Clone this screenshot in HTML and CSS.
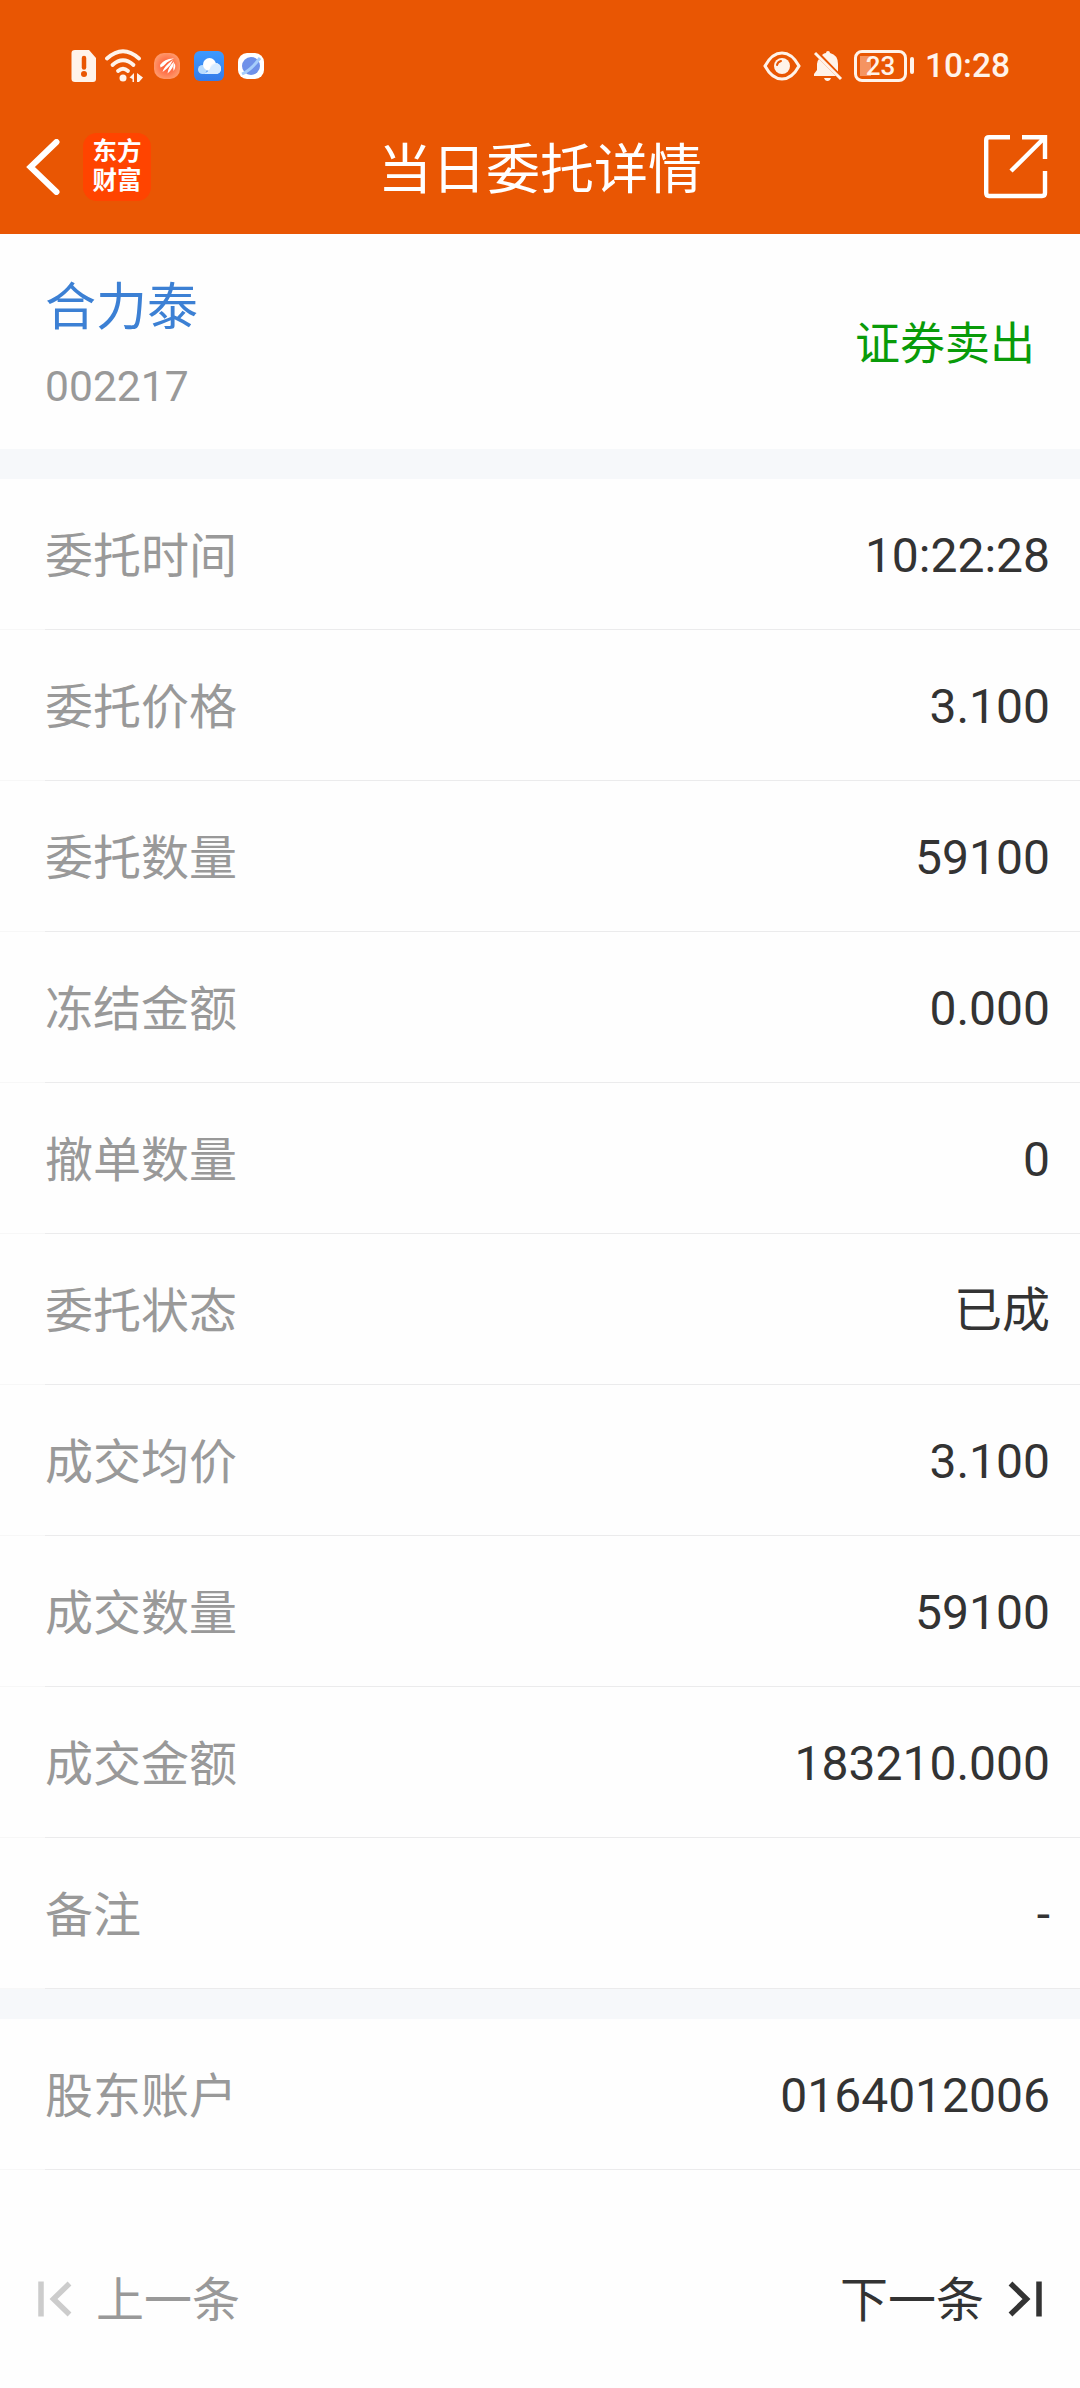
FILE: index.html
```html
<!DOCTYPE html>
<html lang="zh-CN">
<head>
<meta charset="utf-8">
<title>当日委托详情</title>
<link rel="stylesheet" href="styles.css">
</head>
<body>
<header class="header">
  <div class="status">
    <div class="status-left">
      <svg class="i-sim" width="26" height="34" viewBox="0 0 26 34"><path fill="#fff3ea" d="M4 1H18L25 9V30Q25 33 22 33H4Q0.500 33 0.500 30V4Q0.500 1 4 1Z"/><path d="M13 9V18.500" stroke="#e95603" stroke-width="4.500" stroke-linecap="round"/><circle cx="13" cy="25" r="3" fill="#e95603"/></svg>
      <svg class="i-wifi" width="39" height="34" viewBox="0 0 39 34"><g fill="none" stroke="#fff3ea" stroke-width="3.800" stroke-linecap="round"><path d="M2 9.500Q18 -5 34 9.500"/><path d="M7.500 16Q18 6.500 28.500 16"/><path d="M13 22Q18 17.500 23 22"/></g><circle cx="18" cy="29" r="3.500" fill="#fff3ea"/><path fill="#fff3ea" d="M29 24V33H27.500V30L24.500 28.500ZM32 33V24L38 28.500L34 33Z"/></svg>
      <svg class="i-news" width="26" height="26" viewBox="0 0 26 26"><defs><radialGradient id="news"><stop offset=".3" stop-color="#ff633d"/><stop offset="1" stop-color="#ff9668"/></radialGradient></defs><rect width="26" height="26" rx="10" fill="url(#news)"/><path fill="#fff" d="M6 12Q11 5 20 5.500Q14 8 11.500 11Q9 14 6.500 14.500ZM19 7Q17 12 13 15.500Q10 18 8.500 19Q10 13 19 7ZM20 8.500Q20 15 13.500 20.500Q14 14 20 8.500ZM20.500 10Q22.500 14 19.500 18Q18.500 14 20.500 10Z"/></svg>
      <svg class="i-cloud" width="30" height="30" viewBox="0 0 30 30"><defs><linearGradient id="sky" x2="0" y2="1"><stop stop-color="#3d9aff"/><stop offset="1" stop-color="#347be9"/></linearGradient></defs><rect width="30" height="30" rx="6" fill="url(#sky)"/><circle cx="8.500" cy="18.500" r="4.500" fill="#b9dcff"/><circle cx="15.500" cy="13.500" r="6.500" fill="#fff"/><circle cx="21.500" cy="17.500" r="5.500" fill="#eef6ff"/><path fill="#d9ecff" d="M8 23Q14 22 17 16Q19 13 23 12Q27 14 27 18Q27 23 21 23Z"/></svg>
      <svg class="i-planet" width="26" height="26" viewBox="0 0 26 26"><rect width="26" height="26" rx="9" fill="#fff"/><circle cx="13" cy="13" r="9" fill="#6f91e9"/><path d="M4 21Q13 17 22 5" fill="none" stroke="#a6cdfb" stroke-width="3"/></svg>
    </div>
    <div class="status-right">
      <svg class="i-eye" width="38" height="30" viewBox="0 0 38 30"><path d="M2 15Q9 2 19 2T36 15Q29 28 19 28T2 15Z" fill="none" stroke="#fff3ea" stroke-width="3"/><circle cx="19" cy="15" r="8" fill="#fff3ea"/><path d="M14 14Q14.500 11 18 10" fill="none" stroke="#e95603" stroke-width="2" stroke-linecap="round"/></svg>
      <svg class="i-bell" width="30" height="32" viewBox="0 0 30 32"><path fill="#fff3ea" d="M6 9L23 26H1V24L4 20V14Q4 11 6 9ZM9 5Q11 3 13 3Q13 1 15 1T17 3Q25 5 25 14V21.500ZM11 28H18Q17 31 14.500 31T11 28Z"/><path d="M2 3L28 29" stroke="#fff3ea" stroke-width="3"/></svg>
      <div class="battery"><span class="battery-text">23</span></div>
      <div class="battery-nub"></div>
      <span class="clock">10:28</span>
    </div>
  </div>
  <nav class="nav">
    <div class="nav-left">
      <svg class="i-back" width="34" height="56" viewBox="0 0 34 56"><path d="M30.500 3L4.500 28L30.500 53" fill="none" stroke="#fff" stroke-width="6" stroke-linecap="round" stroke-linejoin="miter"/></svg>
      <div class="brand"><span>东方</span><span>财富</span></div>
    </div>
    <h1 class="title">当日委托详情</h1>
    <svg class="i-share" width="64" height="64" viewBox="0 0 64 64" fill="none" stroke="#fff" stroke-width="4.400"><path d="M26 2.200H5Q2.200 2.200 2.200 5V58Q2.200 61 5 61H58Q61 61 61 58V36M38 2.200H61V24M61 2.200L27 36"/></svg>
  </nav>
</header>
<section class="stock">
  <div class="stock-id">
    <div class="stock-name">合力泰</div>
    <div class="stock-code">002217</div>
  </div>
  <div class="side">证券卖出</div>
</section>
<section class="rows">
  <div class="row"><span class="label">委托时间</span><span class="value">10:22:28</span></div>
  <div class="row"><span class="label">委托价格</span><span class="value">3.100</span></div>
  <div class="row"><span class="label">委托数量</span><span class="value">59100</span></div>
  <div class="row"><span class="label">冻结金额</span><span class="value">0.000</span></div>
  <div class="row"><span class="label">撤单数量</span><span class="value">0</span></div>
  <div class="row"><span class="label">委托状态</span><span class="value">已成</span></div>
  <div class="row"><span class="label">成交均价</span><span class="value">3.100</span></div>
  <div class="row"><span class="label">成交数量</span><span class="value">59100</span></div>
  <div class="row"><span class="label">成交金额</span><span class="value">183210.000</span></div>
  <div class="row"><span class="label">备注</span><span class="value">-</span></div>
</section>
<section class="rows">
  <div class="row"><span class="label">股东账户</span><span class="value">0164012006</span></div>
</section>
<footer class="pager">
  <div class="prev">
    <svg width="34" height="36" viewBox="0 0 34 36" fill="none" stroke="#ccc" stroke-width="5.500"><path d="M3 .500V35.500M31.500 2.500L15.500 18L31.500 33.500"/></svg>
    <span class="pager-text">上一条</span>
  </div>
  <div class="next">
    <span class="pager-text">下一条</span>
    <svg width="34" height="36" viewBox="0 0 34 36" fill="none" stroke="#333" stroke-width="5.500"><path d="M31 .500V35.500M2.500 2.500L18.500 18L2.500 33.500"/></svg>
  </div>
</footer>
</body>
</html>
```
FILE: styles.css
```css
* { box-sizing: border-box; }
body {
  margin: 0;
  width: 1080px;
  height: 2388px;
  background: #fefefe;
  font-family: Roboto, "Noto Sans CJK SC", sans-serif;
  color: #333;
  overflow: hidden;
}
svg { display: block; flex: none; }
.header { height: 234px; background: #e95603; color: #fff; }
.status {
  height: 100px;
  padding: 30px 70px 0 71px;
  display: flex;
  justify-content: space-between;
}
.status-left, .status-right { display: flex; align-items: center; height: 71px; }
.status-left { height: 72px; }
.i-wifi { margin-left: 8px; }
.i-news { margin-left: 10px; }
.i-cloud { margin-left: 14px; }
.i-planet { margin-left: 14px; }
.i-bell { margin-left: 12px; }
.battery {
  width: 53px;
  height: 32px;
  margin-left: 11px;
  border: 3px solid #fff3ea;
  border-radius: 8px;
  background: linear-gradient(#f59461, #f59461) 3px 3px / 11px 20px no-repeat;
  display: flex;
  align-items: center;
  justify-content: center;
}
.battery-text { font-size: 26px; line-height: 26px; font-weight: 500; color: #fff3ea; }
.battery-nub { width: 4px; height: 17px; margin-left: 3px; border-radius: 2px; background: #fff3ea; }
.clock { margin-left: 11px; padding-top: 1px; font-size: 33.500px; line-height: 40px; font-weight: 500; color: #fff3ea; }
.nav {
  height: 134px;
  padding: 0 26px;
  display: grid;
  grid-template-columns: 1fr auto 1fr;
  align-items: center;
}
.nav-left { display: flex; align-items: center; height: 132px; }
.brand {
  width: 68px;
  height: 68px;
  margin-left: 23px;
  padding-top: 4px;
  border-radius: 14px;
  background: #ff4400;
  display: flex;
  flex-direction: column;
  align-items: center;
  font-size: 24.500px;
  line-height: 29px;
  font-weight: 700;
}
.title { margin: 0; padding-top: 8px; font-size: 54px; font-weight: 400; line-height: 72px; }
.i-share { justify-self: end; margin-right: 6px; }
.stock {
  height: 215px;
  padding: 0 45px;
  display: flex;
  justify-content: space-between;
  align-items: center;
}
.stock-id { padding-top: 4px; }
.stock-name { font-size: 51px; line-height: 70px; color: #3c80d4; }
.stock-code { margin-top: 15px; font-size: 42.600px; line-height: 56px; color: #999; }
.side { padding-top: 6px; font-size: 45px; line-height: 60px; color: #099b09; }
.rows { border-top: 30px solid #f6f8fa; }
.row {
  height: 151px;
  padding: 0 30px 0 45px;
  display: flex;
  justify-content: space-between;
  align-items: center;
  background: linear-gradient(90deg, #f7f7f7 45px, #ebebec 45px) 0 100% / 100% 1px no-repeat;
}
.label { padding-top: 4px; font-size: 48px; line-height: 70px; color: #999; }
.value { padding-top: 2px; font-size: 48px; line-height: 70px; }
.pager {
  height: 218px;
  padding: 41px 38px 0;
  display: flex;
  justify-content: space-between;
  align-items: flex-start;
  font-size: 48px;
}
.prev, .next { display: flex; align-items: center; height: 176px; }
.pager-text { padding-top: 4px; line-height: 70px; }
.prev { color: #999; gap: 24px; }
.next { gap: 24px; }
```
